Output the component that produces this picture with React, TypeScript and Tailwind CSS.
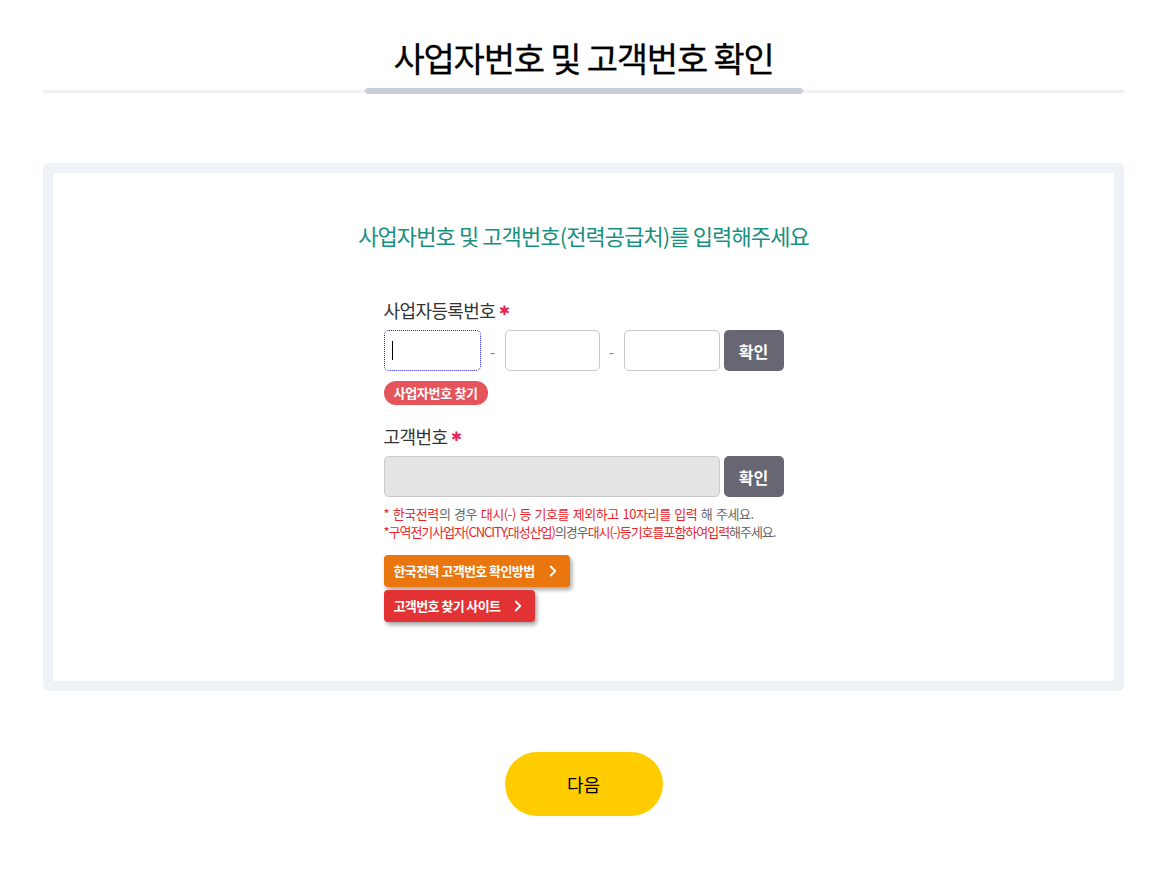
import { ChevronRight } from "lucide-react";

const font = { fontFamily: '"Noto Sans CJK KR", "Noto Sans", sans-serif' };

export default function App() {
  return (
    <main className="min-h-screen bg-white px-[43px] pt-[34px]" style={font}>
      {/* page title */}
      <header>
        <h1 className="text-center text-[34px] leading-[48px] font-normal text-black tracking-[-1.2px] [-webkit-text-stroke:0.3px_black]">
          사업자번호 및 고객번호 확인
        </h1>
        <div className="mt-[6px] flex h-[6px] items-center">
          <div className="h-[3px] flex-1 bg-[#eef0f4]" />
          <div className="h-[6px] w-[438px] rounded-full bg-[#c8ced9]" />
          <div className="h-[3px] flex-1 bg-[#eef0f4]" />
        </div>
      </header>

      {/* form box */}
      <section className="mt-[69px] rounded-[6px] border-[10px] border-[#eef1f5] bg-white pt-[48px] pb-[59px]">
        <h2 className="text-center text-[22px] leading-[28px] text-[#17907f] tracking-[-0.9px]">
          사업자번호 및 고객번호(전력공급처)를 입력해주세요
        </h2>

        <div className="mx-auto mt-[49px] w-[400px]">
          <label className="flex items-center gap-[4px] text-[18px] leading-[24px] text-[#333] tracking-[-0.6px]">
            사업자등록번호
            <span className="text-[13px] text-[#e2275b]">✱</span>
          </label>
          <div className="mt-[8px] flex items-center">
            <div className="flex h-[41px] w-[97px] items-center rounded-[5px] border border-dotted border-[#1a1aff] pl-[7px]">
              <span className="h-[19px] w-px bg-black" />
            </div>
            <span className="w-[24px] text-center text-[#888]">-</span>
            <input className="h-[41px] w-[95px] rounded-[5px] border border-[#c8c8c8] bg-white" />
            <span className="w-[24px] text-center text-[#888]">-</span>
            <input className="h-[41px] w-[96px] rounded-[5px] border border-[#c8c8c8] bg-white" />
            <button className="ml-[4px] h-[41px] w-[60px] rounded-[5px] bg-[#676672] text-[16px] font-bold text-white">
              확인
            </button>
          </div>
          <button className="mt-[10px] flex h-[24px] items-center rounded-full bg-[#e5535b] px-[10px] text-[13px] font-bold text-white tracking-[-0.3px]">
            사업자번호 찾기
          </button>

          <label className="mt-[19px] flex items-center gap-[4px] text-[18px] leading-[24px] text-[#333] tracking-[-0.6px]">
            고객번호
            <span className="text-[13px] text-[#e2275b]">✱</span>
          </label>
          <div className="mt-[8px] flex items-center">
            <input
              disabled
              className="h-[41px] w-[336px] rounded-[5px] border border-[#c8c8c8] bg-[#e4e4e4]"
            />
            <button className="ml-[4px] h-[41px] w-[60px] rounded-[5px] bg-[#676672] text-[16px] font-bold text-white">
              확인
            </button>
          </div>

          <div className="mt-[8px] text-[13px] leading-[18px] text-[#666]">
            <p className="tracking-[-0.4px] [word-spacing:1px]">
              <span className="text-[#e8262a]">* 한국전력</span>의 경우{" "}
              <span className="text-[#e8262a]">대시(-) 등 기호를 제외하고 10자리를 입력</span> 해 주세요.
            </p>
            <p className="tracking-[-1.03px]">
              <span className="text-[#e8262a]">*구역전기사업자(CNCITY,대성산업)</span>의경우
              <span className="text-[#e8262a]">대시(-)등기호를포함하여입력</span>해주세요.
            </p>
          </div>

          <div className="mt-[14px] flex flex-col items-start gap-[3px]">
            <button className="flex h-[32px] items-center gap-[9px] rounded-[4px] bg-[#e9760f] pl-[10px] pr-[8px] text-[13px] font-bold text-white tracking-[-0.6px] shadow-[2px_3px_4px_rgba(0,0,0,0.35)]">
              한국전력 고객번호 확인방법
              <ChevronRight size={18} strokeWidth={2.5} />
            </button>
            <button className="flex h-[32px] items-center gap-[9px] rounded-[4px] bg-[#e23234] pl-[10px] pr-[8px] text-[13px] font-bold text-white tracking-[-0.6px] shadow-[2px_3px_4px_rgba(0,0,0,0.35)]">
              고객번호 찾기 사이트
              <ChevronRight size={18} strokeWidth={2.5} />
            </button>
          </div>
        </div>
      </section>

      <div className="mt-[61px] flex justify-center pb-[60px]">
        <button className="h-[64px] w-[158px] rounded-full bg-[#ffcc00] text-[18px] text-black">
          다음
        </button>
      </div>
    </main>
  );
}
